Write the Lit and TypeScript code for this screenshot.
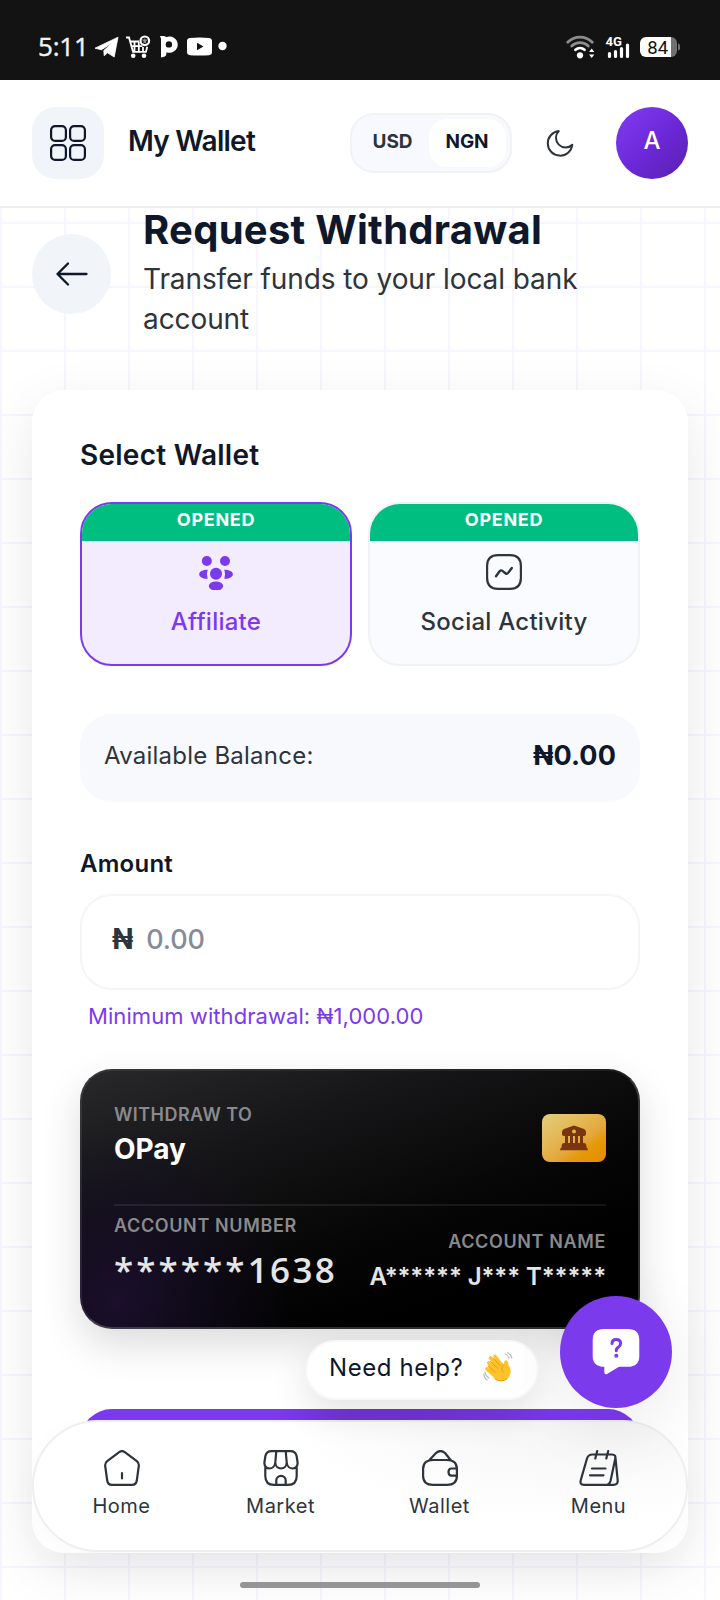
import { LitElement, html, css, svg } from "lit";
import { customElement } from "lit/decorators.js";

@customElement("status-bar")
class StatusBar extends LitElement {
  static styles = css`
    :host { display: flex; justify-content: space-between; height: 80px; background: #131313; color: #fff; box-sizing: border-box; padding: 30px 39px 0 38px; }
    .side { display: flex; height: 34px; align-items: center; }
    .time { font: 500 26px/32px "Open Sans", sans-serif; letter-spacing: -0.2px; width: 54px; color: #f2f2f2; padding-bottom: 2px; -webkit-text-stroke: 0.4px #f2f2f2; }
    .cell { font: 700 13px "Roboto", sans-serif; }
    .pct { font: 400 18.5px "Roboto", sans-serif; }
  `;
  render() {
    return html`
      <div class="side">
        <span class="time">5:11</span>
        <svg width="136" height="34" viewBox="92 30 136 34" fill="#fff">
          <path d="M95 48.2 118 37.2 114.2 57 107.5 52.8 104.2 55.8 103.8 50.5 113 42.3 101.5 49.8Z" stroke="#fff" stroke-width=".8" stroke-linejoin="round"/>
          <g fill="none" stroke="#fff" stroke-width="1.8">
            <path d="M126 37.5h3l4 14.3h13l1.2-5M130 41.5h9M131.5 46.2h11M134.5 41v10M138.8 42v9M143 47v4"/>
            <circle cx="144.8" cy="40.800" r="4.300" stroke-width="2.200"/>
          </g>
          <path d="M141.500 39.500h6.600l-5 4.500 1.700-6.500 1.700 6.500Z" opacity=".55"/>
          <circle cx="133.2" cy="55.8" r="2.3"/><circle cx="144" cy="55.8" r="2.3"/>
          <path fill-rule="evenodd" d="M160 36H163.500Q165.500 36 166 37.200A8.200 8.200 0 1 1 166.400 52.200V54Q166 57.200 161 57.400V38.800ZM168.900 41.200a3.200 3.200 0 1 0 0 6.400a3.200 3.200 0 1 0 0-6.400Z"/>
          <path fill-rule="evenodd" d="M190 38Q199.500 37 209 38Q212 38.300 212 41V52Q212 54.800 209 55.200Q199.500 56 190 55.200Q187 54.800 187 52V41Q187 38.300 190 38ZM197 42.700V50.300L203.500 46.500Z"/>
          <circle cx="222.500" cy="46" r="4.200"/>
        </svg>
      </div>
      <div class="side">
        <svg width="116" height="34" viewBox="565 30 116 34">
          <g fill="none" stroke-linecap="round" stroke-width="2.800">
            <path d="M567.700 42.300a17 17 0 0 1 24.600 0M571.700 46a12 12 0 0 1 16.600 0" stroke="#8d8d8d"/>
            <path d="M575.500 49.800a7 7 0 0 1 9 0" stroke="#fff"/>
          </g>
          <circle cx="580" cy="55.300" r="3.100" fill="#fff"/>
          <path d="M591.700 48.500l2.600 3.600h-5.200ZM591.700 58l2.600-3.600h-5.200Z" fill="#fff"/>
          <text class="cell" x="605.500" y="45.500" fill="#fff" textLength="16.500" lengthAdjust="spacingAndGlyphs">4G</text>
          <path d="M609.500 53.500v3M615.500 51.500v5M621.500 48.500v8M627.500 45v11.500" stroke="#fff" stroke-width="3.200" stroke-linecap="round"/>
          <path d="M646 37h25v20h-25a6 6 0 0 1-6-6v-8a6 6 0 0 1 6-6Z" fill="#fff"/>
          <path d="M671 37a6 6 0 0 1 6 6v8a6 6 0 0 1-6 6Z" fill="#707070"/>
          <path d="M678 43.500q2 0 2 2v3q0 2-2 2Z" fill="#707070"/>
          <text class="pct" x="647.300" y="54" fill="#131313">84</text>
        </svg>
      </div>`;
  }
}

@customElement("app-header")
class AppHeader extends LitElement {
  static styles = css`
    :host { display: flex; align-items: center; height: 128px; box-sizing: border-box; padding: 0 32px; border-bottom: 2px solid #eeeef0; background: #fff; position: relative; z-index: 2; }
    .grid { width: 72px; height: 72px; border-radius: 24px; background: #f1f5fa; display: grid; place-items: center; }
    .title { flex: 1; padding: 0 0 4px 24px; font-weight: 600; font-size: 28px; line-height: 40px; color: #0f172a; letter-spacing: -0.75px; }
    .toggle { display: flex; box-sizing: border-box; width: 162px; height: 60px; padding: 4px; border: 2px solid #f1f2f6; border-radius: 24px; background: #f8f9fe; font-size: 19px; font-weight: 700; line-height: 45px; text-align: center; color: #2d343c; letter-spacing: -0.1px; }
    .toggle span { width: 73px; height: 48px; border-radius: 18px; }
    .toggle .on { flex: 1; background: #fff; color: #0f172a; text-indent: -1px; }
    .moon { width: 96px; height: 72px; display: grid; place-items: center; margin-right: 8px; }
    .avatar { width: 72px; height: 72px; border-radius: 50%; background: linear-gradient(135deg, #7c3aed 10%, #6d28d9 50%, #5b21b6 92%); color: #fff; font-size: 24px; font-weight: 500; line-height: 68px; text-align: center; }
  `;
  render() {
    return html`
      <div class="grid"><svg width="36" height="36" fill="none" stroke="#0f172a" stroke-width="2.200">
        <rect x="1.100" y="1.100" width="14.800" height="14.800" rx="4"/><rect x="20.100" y="1.100" width="14.800" height="14.800" rx="4"/>
        <rect x="1.100" y="20.100" width="14.800" height="14.800" rx="4"/><rect x="20.100" y="20.100" width="14.800" height="14.800" rx="4"/></svg></div>
      <div class="title">My Wallet</div>
      <div class="toggle"><span>USD</span><span class="on">NGN</span></div>
      <div class="moon"><svg width="28" height="28" fill="none" stroke="#2d343c" stroke-width="2" stroke-linejoin="round"><path d="M12.800 2.100A12.300 12.300 0 1 0 26.300 15.700A9 9 0 0 1 12.800 2.100Z"/></svg></div>
      <div class="avatar">A</div>`;
  }
}

const affiliateIcon = svg`<g fill="#7c3aed"><circle cx="8.800" cy="7" r="5"/><circle cx="27" cy="7" r="5"/><circle cx="18" cy="19.800" r="6"/>
  <ellipse cx="18" cy="32" rx="7.200" ry="4.600"/><path d="M9.700 15.700a13 13 0 0 0 0 9C5 25 1.200 23 1.200 20.200S5 15.700 9.700 15.700ZM26.300 15.700a13 13 0 0 1 0 9C31 25 34.900 23 34.900 20.200S31 15.700 26.300 15.700Z"/></g>`;
const activityIcon = svg`<g fill="none" stroke="#2d343c" stroke-width="2.200" stroke-linecap="round" stroke-linejoin="round">
  <path d="M1.100 12Q1.100 1.100 12 1.100H24Q34.900 1.100 34.900 12V24Q34.900 34.900 24 34.900H12Q1.100 34.900 1.100 24Z"/><path d="M10 22.300l3.600-5c.8-1 1.800-1.200 2.800-.4l3 2.300c1 .8 2 .6 2.800-.4l3.600-4.800" stroke-width="2.400"/></g>`;

@customElement("wallet-option")
class WalletOption extends LitElement {
  static properties = { label: {}, active: { type: Boolean, reflect: true }, icon: { attribute: false } };
  declare label: string;
  declare active: boolean;
  declare icon: unknown;
  static styles = css`
    :host { display: flex; flex-direction: column; align-items: center; box-sizing: border-box; height: 164px; border: 2px solid #f1f2f6; border-radius: 32px; overflow: hidden; background: #fafbfe; color: #2d343c; }
    :host([active]) { background: #f3ebfe; border-color: #7c3aed; color: #7c3aed; }
    .tag { align-self: stretch; height: 37px; background: #00be7f; color: #fff; text-align: center; font-size: 18px; line-height: 32px; font-weight: 700; letter-spacing: 0.7px; }
    svg { margin-top: 13px; }
    .label { margin-top: 15px; font-size: 24px; line-height: 34px; font-weight: 550; letter-spacing: 0.25px; }
  `;
  render() {
    return html`<div class="tag">OPENED</div><svg width="36" height="36">${this.icon}</svg><div class="label">${this.label}</div>`;
  }
}

@customElement("bank-card")
class BankCard extends LitElement {
  static styles = css`
    :host { display: block; box-sizing: border-box; height: 260px; margin-top: 37px; border: 2px solid #ffffff30; border-top-color: #ffffff12; border-left-color: #ffffff16; border-radius: 32px; padding: 32px; color: #fff;
      background: radial-gradient(circle at 35px 230px, #1b0f2c 0, #160d2690 80px, transparent 175px) border-box, linear-gradient(160deg, #29292b 0, #161618 28%, #060606 58%, #000 78%) border-box; box-shadow: 0 16px 40px rgba(0,0,0,.14); }
    .row { display: flex; justify-content: space-between; }
    .top { height: 103px; box-sizing: border-box; border-bottom: 2px solid #ffffff14; }
    .cap { font-size: 18px; line-height: 24px; font-weight: 600; letter-spacing: 0.62px; color: #8a8a8c; }
    .top .cap { letter-spacing: 0.45px; }
    .bank { font-size: 28px; line-height: 40px; font-weight: 700; letter-spacing: -0.05px; margin-top: 2px; }
    .chip { margin-top: 11px; width: 64px; height: 48px; border-radius: 8px; background: linear-gradient(145deg, #e2cd7d 0, #e4b956 35%, #e4a63a 60%, #e59a0a 72%, #e58b00 100%); display: grid; place-items: center; }
    .bottom { padding-top: 8px; }
    .num { font: 600 35px/48px "Open Sans", sans-serif; color: #e5e5e5; margin-top: 8px; letter-spacing: 2.35px; }
    .num span { letter-spacing: 3.1px; }
    .right { text-align: right; padding-top: 16px; }
    .name { font-size: 24px; line-height: 34px; font-weight: 600; color: #e5e5e5; margin-top: 6px; letter-spacing: -0.1px; }
  `;
  render() {
    return html`
      <div class="row top">
        <div><div class="cap">WITHDRAW TO</div><div class="bank">OPay</div></div>
        <div class="chip"><svg width="28" height="26" viewBox="0 0 28 26"><path fill="#78350f" fill-rule="evenodd" d="M14 .5 24 4Q26 4.800 26 7V9Q26 11 24 11H23V18H24Q26 18 26.300 20L26.500 22.500Q28 23 28 25.200H0Q0 23 1.500 22.500L1.700 20Q2 18 4 18H5V11H4Q2 11 2 9V7Q2 4.800 4 4ZM8 11V18H10V11ZM13 11V18H15V11ZM18 11V18H20V11ZM14 4.500A2 2 0 1 0 14 8.500A2 2 0 1 0 14 4.500Z"/></svg></div>
      </div>
      <div class="row bottom">
        <div><div class="cap">ACCOUNT NUMBER</div><div class="num"><span>******</span>1638</div></div>
        <div class="right"><div class="cap">ACCOUNT NAME</div><div class="name">A****** J*** T*****</div></div>
      </div>`;
  }
}

const navItems = [
  { label: "Home", w: 36, icon: svg`<path d="M15.200 2.200Q18 .2 20.800 2.200L32.800 11.200Q35.200 13 34.800 16L32.800 30.500Q32.200 34.900 28 34.900H8Q3.800 34.900 3.200 30.500L1.200 16Q.8 13 3.200 11.200ZM18 23V28.500"/>` },
  { label: "Market", w: 36, icon: svg`<path d="M2.300 17.500V26Q2.300 34.900 11 34.900H25Q33.700 34.900 33.700 26V17.500M8.500 1.100H27.500Q32.500 1.100 33.600 6L34.600 12.500C35 20.500 24.500 20.500 23.700 12.500C23.500 20.500 12.500 20.500 12.300 12.500C11.500 20.500 1 20.500 1.400 12.500L2.400 6Q3.500 1.100 8.500 1.100ZM13.300 1.100L12.300 12.500M22.700 1.100L23.700 12.500M13.300 34.900V30.500A4.700 4.700 0 0 1 22.700 30.500V34.900"/>` },
  { label: "Wallet", w: 36, icon: svg`<path d="M11 10H25Q34.900 10 34.900 19V26Q34.900 34.900 25 34.900H11Q1.100 34.900 1.100 26V19Q1.100 10 11 10ZM7 10.500L14 3Q18.500-1 23 3L29 10.500M34.900 18.500H29.500Q26.500 18.500 26.500 22T29.500 25.700H34.900"/>` },
  { label: "Menu", w: 40, icon: svg`<path d="M13.500 4.500H33Q37.200 4.500 36.200 9L31.500 31Q30.500 34.900 26.500 34.900H5Q.5 34.900 1.800 30L8 8.500Q9.200 4.500 13.500 4.500ZM36.500 8L38.700 30.500Q38.900 34.900 34.500 34.900H27M18.200 1.100L16.300 8.500M29.200 1.100L27.300 8.500M13 18.500H26.500M11 25.300H24.500"/>` },
];

@customElement("bottom-nav")
class BottomNav extends LitElement {
  static styles = css`
    :host { display: flex; box-sizing: border-box; height: 132px; padding: 28px 8px 0 8px; border: 2px solid #eeeff0; border-radius: 66px; background: radial-gradient(ellipse 300px 120px at 540px -20px, #f3f3f3 0, #f9f9f9 50%, #ffffff 100%), #fff; box-shadow: 0 12px 40px rgba(30,10,80,.025); }
    .item { flex: 1; display: flex; flex-direction: column; align-items: center; gap: 5px; font-size: 20px; line-height: 30px; color: #2d343c; letter-spacing: 0.5px; }
  `;
  render() {
    return navItems.map((n) => html`<div class="item"><svg width=${n.w} height="36" fill="none" stroke="#2d343c" stroke-width="2.200" stroke-linecap="round" stroke-linejoin="round">${n.icon}</svg>${n.label}</div>`);
  }
}

@customElement("help-bubble")
class HelpBubble extends LitElement {
  static styles = css`
    :host { display: flex; align-items: flex-start; gap: 21px; }
    .pill { display: flex; align-items: center; gap: 18px; box-sizing: border-box; width: 234px; height: 60px; margin-top: 44px; padding: 0 24px 6px 22px; border: 2px solid #f7f7f7; border-radius: 30px; background: #fff; box-shadow: 0 14px 36px rgba(0,0,0,.11); font-size: 24px; color: #0f172a; white-space: nowrap; }
    .text { flex: 1; letter-spacing: 0.6px; }
    .chat { width: 112px; height: 112px; border-radius: 50%; background: #7c3aed; display: grid; place-items: center; box-shadow: 0 16px 70px rgba(0,0,0,.09); }
  `;
  render() {
    return html`
      <div class="pill"><span class="text">Need help?</span>
        <svg width="30" height="30" viewBox="0 0 30 30" fill="none" stroke-linecap="round">
          <path d="M5 14.500Q4.200 11.500 7 11.500L13 7 21 12Q21 7 24 8.500Q25.500 9.500 25.500 13Q29 18 27 23Q24 29 18.500 29Q13 29 9 23.500Z" fill="#ffc329"/>
          <path d="M4 17 14 26M5.800 11 14.500 18M7.500 6 16.500 15M12 4.500 18.500 13" stroke="#ffc329" stroke-width="3.600"/>
          <path d="M7.500 9.500 15 16.500M10.500 6.500 17 13.500M5.500 14.500 12.500 20.500M21 13Q17 16 20 20M12 27Q18 31 24 27" stroke="#e89a20" stroke-width="1"/>
          <path d="M22 2Q25 3 26 6M24.500.8Q28 2.500 28.800 6M2 20Q2.500 24 6 26M.8 22Q1 26 4 28" stroke="#b4bcc2" stroke-width="1.200"/>
        </svg></div>
      <div class="chat"><svg width="48" height="48"><path d="M12 1H36Q47.300 1 47.300 12V28Q47.300 38.800 36 38.800H27L15 46Q12.500 47 12.300 44V38.800Q.7 38.800 .7 28V12Q.7 1 12 1Z" fill="#fff"/><path d="M20 15.500Q20 11.500 24.300 11.500T28.600 15.500Q28.600 17.800 26.300 19.200T24.300 22.800" fill="none" stroke="#7c3aed" stroke-width="3" stroke-linecap="round"/><circle cx="24.300" cy="27.800" r="2" fill="#7c3aed"/></svg></div>`;
  }
}

@customElement("app-root")
class AppRoot extends LitElement {
  static styles = css`
    :host { display: flex; flex-direction: column; position: relative; width: 720px; height: 1600px; overflow: hidden; font-family: "Inter", sans-serif; color: #0f172a;
      background: linear-gradient(90deg, #f7f5fd 2px, transparent 2px) 0 0 / 64px 64px, linear-gradient(#f7f5fd 2px, transparent 2px) 0 30px / 64px 64px, #fff; }
    .head { display: flex; align-items: center; height: 132px; padding: 0 32px; }
    .back { width: 79px; height: 80px; border-radius: 50%; background: #f1f5fa; display: grid; place-items: center; margin-right: 32px; }
    .text { padding-bottom: 5px; }
    h1 { margin: 0 0 4px; font-size: 40px; line-height: 50px; font-weight: 700; letter-spacing: 0.27px; white-space: nowrap; }
    .sub { font-size: 28px; line-height: 40px; color: #2d343c; width: 470px; letter-spacing: -0.09px; }
    .card { margin: 50px 32px 0; height: 1163px; flex: none; box-sizing: border-box; padding: 45px 48px 0; border-radius: 32px; background: #fff; box-shadow: 0 16px 54px rgba(8,0,24,.095); }
    h2 { margin: 0; font-size: 28px; line-height: 40px; font-weight: 600; letter-spacing: 0.25px; }
    .wallets { display: grid; grid-template-columns: 1fr 1fr; gap: 16px; margin-top: 27px; }
    .balance { display: flex; justify-content: space-between; align-items: center; height: 88px; margin-top: 48px; padding: 0 24px 6px; box-sizing: border-box; border-radius: 32px; background: #f8f9fd; font-size: 24px; color: #2d343c; letter-spacing: 0.23px; }
    .balance b { font-size: 27px; color: #0f172a; letter-spacing: 0.1px; }
    .label { margin-top: 44px; font-size: 24px; line-height: 36px; font-weight: 600; letter-spacing: 0.25px; }
    .input { display: flex; gap: 13px; align-items: center; box-sizing: border-box; height: 96px; margin-top: 12px; padding: 0 30px 6px; border: 2px solid #f5f5f7; border-radius: 32px; font-size: 27px; font-weight: 500; color: #858b97; letter-spacing: -0.1px; }
    .input b { color: #2d343c; font-size: 28px; letter-spacing: 0; }
    .min { margin: 10px 8px 0; font-size: 22px; line-height: 32px; color: #7c3aed; letter-spacing: 0.07px; }
    .submit { height: 96px; margin-top: 80px; border-radius: 32px; background: linear-gradient(90deg, #7c3aed 35%, #7334d9 48%, #7334d9 62%, #7c3aed 88%); }
    .help { position: absolute; right: 48px; top: 1296px; z-index: 2; }
    .nav { position: absolute; left: 32px; right: 32px; top: 1420px; z-index: 1; }
    .handle { position: absolute; left: 240px; top: 1582px; width: 240px; height: 6px; border-radius: 3px; background: #959595; }
  `;
  render() {
    return html`
      <status-bar></status-bar>
      <app-header></app-header>
      <div class="head">
        <div class="back"><svg width="32" height="24" fill="none" stroke="#0f172a" stroke-width="2.300" stroke-linecap="round" stroke-linejoin="round"><path d="M12 1.500 1.500 12 12 22.500M1.500 12H30.500"/></svg></div>
        <div class="text"><h1>Request Withdrawal</h1><div class="sub">Transfer funds to your local bank account</div></div>
      </div>
      <div class="card">
        <h2>Select Wallet</h2>
        <div class="wallets">
          <wallet-option active label="Affiliate" .icon=${affiliateIcon}></wallet-option>
          <wallet-option label="Social Activity" .icon=${activityIcon}></wallet-option>
        </div>
        <div class="balance"><span>Available Balance:</span><b>₦0.00</b></div>
        <div class="label">Amount</div>
        <div class="input"><b>₦</b><span>0.00</span></div>
        <div class="min">Minimum withdrawal: ₦1,000.00</div>
        <bank-card></bank-card>
        <div class="submit"></div>
      </div>
      <help-bubble class="help"></help-bubble>
      <bottom-nav class="nav"></bottom-nav>
      <div class="handle"></div>`;
  }
}
